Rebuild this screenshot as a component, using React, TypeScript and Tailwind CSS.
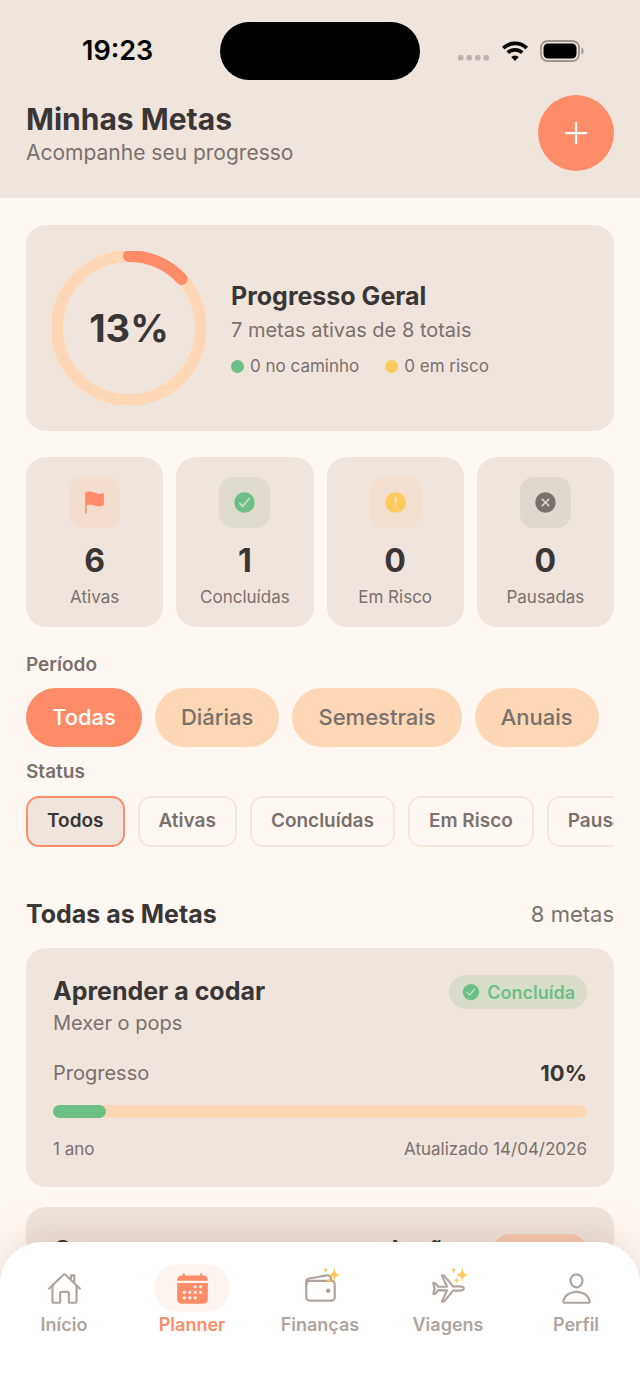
import type { FC, ReactNode } from "react";
import type { IconType } from "react-icons";
import {
  IoAdd,
  IoAirplaneOutline,
  IoAlertCircle,
  IoCalendar,
  IoCheckmarkCircle,
  IoCloseCircle,
  IoFlag,
  IoHomeOutline,
  IoPersonOutline,
  IoWalletOutline,
} from "react-icons/io5";

const stats = [
  { icon: IoFlag, value: 6, label: "Ativas", tile: "bg-[#f3ddce] text-[#ff8c69]" },
  { icon: IoCheckmarkCircle, value: 1, label: "Concluídas", tile: "bg-[#dfdccf] text-[#6bbf87]" },
  { icon: IoAlertCircle, value: 0, label: "Em Risco", tile: "bg-[#f3dfd0] text-[#ffc95c]" },
  { icon: IoCloseCircle, value: 0, label: "Pausadas", tile: "bg-[#e0d7ce] text-[#7a706e]" },
];

const periods = ["Todas", "Diárias", "Semestrais", "Anuais"];
const statuses = ["Todos", "Ativas", "Concluídas", "Em Risco", "Pausadas"];

const tabs: { icon: IconType; label: string; active?: boolean; sparkle?: boolean }[] = [
  { icon: IoHomeOutline, label: "Início" },
  { icon: IoCalendar, label: "Planner", active: true },
  { icon: IoWalletOutline, label: "Finanças", sparkle: true },
  { icon: IoAirplaneOutline, label: "Viagens", sparkle: true },
  { icon: IoPersonOutline, label: "Perfil" },
];

const StatusBar: FC = () => (
  <div className="items-center grid grid-cols-3 pt-[22px]">
    <span className="pl-14 font-semibold text-[27px] text-black">19:23</span>
    <div className="justify-self-center bg-black rounded-full w-50 h-[58px]" />
    <div className="flex justify-end items-center gap-3 pr-[30px]">
      <svg width="32" height="20" viewBox="0 0 32 20" fill="#bdb3ae">
        <rect x="0" y="14" width="5.5" height="5.5" rx="2" />
        <rect x="8.5" y="14" width="5.5" height="5.5" rx="2" />
        <rect x="17" y="14" width="5.5" height="5.5" rx="2" />
        <rect x="25.5" y="14" width="5.5" height="5.5" rx="2" />
      </svg>
      <svg width="26" height="20" viewBox="0 0 26 20" fill="none" stroke="#000" strokeWidth="3.8">
        <path d="M1.3 7.2 A16.8 16.8 0 0 1 24.7 7.2" />
        <path d="M5.8 11.7 A10.4 10.4 0 0 1 20.2 11.7" />
        <path d="M13 20 L9.2 16.1 A5.4 5.4 0 0 1 16.8 16.1 Z" fill="#000" stroke="none" />
      </svg>
      <svg width="44" height="22" viewBox="0 0 44 22">
        <rect x="1" y="1" width="38" height="20" rx="6.5" fill="none" stroke="#9d9390" strokeWidth="1.8" />
        <rect x="3.5" y="3.5" width="33" height="15" rx="4.5" fill="#000" />
        <path d="M41.5 7.5 C44.3 8.8 44.3 13.2 41.5 14.5 Z" fill="#9d9390" />
      </svg>
    </div>
  </div>
);

const Sparkles: FC = () => (
  <svg width="21" height="18" viewBox="0 0 21 18" fill="#ffc95c" className="top-0.5 right-[17px] absolute">
    <path d="M14.3 1 C14.9 6.300 15.700 7.800 20.800 8.800 C15.700 9.800 14.900 11.300 14.300 16.600 C13.700 11.300 12.900 9.800 7.800 8.800 C12.900 7.800 13.700 6.300 14.300 1 Z" />
    <path d="M5.700 0.500 C6 3 6.500 3.500 8.600 4 C6.500 4.500 6 5 5.700 7.500 C5.400 5 4.900 4.500 2.800 4 C4.900 3.500 5.400 3 5.700 0.500 Z" />
    <path d="M8.700 11 C9 13.300 9.500 13.800 11.500 14.300 C9.500 14.800 9 15.300 8.700 17.600 C8.400 15.300 7.900 14.800 5.900 14.300 C7.900 13.800 8.400 13.300 8.700 11 Z" />
  </svg>
);

const ProgressRing: FC<{ percent: number }> = ({ percent }) => {
  const length = 2 * Math.PI * 72;
  return (
    <div className="relative w-[154px] h-[154px] shrink-0">
      <svg viewBox="0 0 154 154" className="w-full h-full -rotate-90" fill="none" strokeWidth="12">
        <circle cx="77" cy="77" r="72" stroke="#ffd7b5" />
        <circle
          cx="77"
          cy="77"
          r="72"
          stroke="#ff8c69"
          strokeLinecap="round"
          strokeDasharray={`${(length * percent) / 100} ${length}`}
        />
      </svg>
      <span className="absolute inset-0 flex justify-center items-center font-bold text-[38px]">{percent}%</span>
    </div>
  );
};

const GoalCard: FC<{ title: string; description: string; percent: number; footer: string; badge: ReactNode }> = ({
  title,
  description,
  percent,
  footer,
  badge,
}) => (
  <article className="bg-[#efe5dc] px-[27px] pt-[27px] pb-6 rounded-[20px]">
    <div className="flex justify-between items-start">
      <div className="min-w-0">
        <h3 className="font-bold text-[25px] truncate leading-8">{title}</h3>
        <p className="text-[#7a706e] text-[20px] leading-8">{description}</p>
      </div>
      {badge}
    </div>
    <div className="flex justify-between items-center mt-[18px]">
      <span className="text-[#7a706e] text-[20px] leading-8">Progresso</span>
      <span className="font-bold text-[22px] leading-8">{percent}%</span>
    </div>
    <div className="bg-[#ffd7b5] mt-4 rounded-full h-[13px]">
      <div className="bg-[#6bbf87] rounded-full h-full" style={{ width: `${percent}%` }} />
    </div>
    <div className="flex justify-between items-center mt-[17px] text-[#7a706e] text-[17px] leading-7">
      <span>{footer}</span>
      <span>Atualizado 14/04/2026</span>
    </div>
  </article>
);

const App: FC = () => {
  return (
    <div className="flex flex-col bg-[#fff8f2] h-screen overflow-hidden font-['Inter',sans-serif] text-[#3a3635]">
      <header className="bg-[#efe5dc] px-[26px] pb-[27px] shrink-0">
        <StatusBar />
        <div className="flex justify-between items-center mt-[15px]">
          <div className="pt-1">
            <h1 className="font-bold text-[30px] leading-9">Minhas Metas</h1>
            <p className="text-[#7a706e] text-[21px] leading-8">Acompanhe seu progresso</p>
          </div>
          <button aria-label="Adicionar meta" className="flex justify-center items-center bg-[#ff8c69] rounded-full w-19 h-19 text-white cursor-pointer">
            <IoAdd size={36} />
          </button>
        </div>
      </header>

      <main className="flex-1 px-[26px] pt-[27px] min-h-0 overflow-y-auto [scrollbar-width:none]">
        <section className="flex items-center gap-[25px] bg-[#efe5dc] p-[26px] rounded-[20px]">
          <ProgressRing percent={13} />
          <div className="pt-1">
            <h2 className="font-bold text-[25px] leading-8">Progresso Geral</h2>
            <p className="mt-0.5 text-[#7a706e] text-[20px] leading-8">7 metas ativas de 8 totais</p>
            <div className="flex gap-[26px] mt-1.5 text-[#7a706e] text-[17px] leading-7">
              <span className="flex items-center gap-1.5">
                <i className="bg-[#6bbf87] rounded-full w-[13px] h-[13px]" />0 no caminho
              </span>
              <span className="flex items-center gap-1.5">
                <i className="bg-[#ffc95c] rounded-full w-[13px] h-[13px]" />0 em risco
              </span>
            </div>
          </div>
        </section>

        <section className="gap-[13px] grid grid-cols-4 mt-[26px]">
          {stats.map(({ icon: Icon, value, label, tile }) => (
            <div key={label} className="flex flex-col items-center bg-[#efe5dc] pt-5 pb-4 rounded-[20px]">
              <div className={`flex justify-center items-center rounded-[14px] w-[51px] h-[51px] ${tile}`}>
                <Icon size={25} />
              </div>
              <span className="mt-[13px] font-bold text-[32px] leading-10">{value}</span>
              <span className="mt-0.5 text-[#7a706e] text-[17px] leading-7">{label}</span>
            </div>
          ))}
        </section>

        <section className="mt-6">
          <h2 className="font-semibold text-[#7a706e] text-[19px] leading-7">Período</h2>
          <div className="flex gap-[13px] mt-[9px] overflow-hidden">
            {periods.map((period, i) => (
              <button
                key={period}
                className={`px-[26px] rounded-full h-[59px] font-medium text-[22px] shrink-0 cursor-pointer ${
                  i === 0 ? "bg-[#ff8c69] text-white" : "bg-[#ffd7b5] text-[#7a706e]"
                }`}
              >
                {period}
              </button>
            ))}
          </div>
          <h2 className="mt-[11px] font-semibold text-[#7a706e] text-[19px] leading-7">Status</h2>
          <div className="flex gap-[13px] mt-[10px] overflow-hidden">
            {statuses.map((status, i) => (
              <button
                key={status}
                className={`px-[19px] border-2 rounded-[13px] h-[51px] font-semibold text-[19px] shrink-0 cursor-pointer ${
                  i === 0 ? "bg-[#efe5dc] border-[#ff8c69] text-[#3a3635]" : "border-[#f1e7df] text-[#7a706e]"
                }`}
              >
                {status}
              </button>
            ))}
          </div>
        </section>

        <section className="mt-[51px]">
          <div className="flex justify-between items-center mb-[18px]">
            <h2 className="font-bold text-[25px] leading-8">Todas as Metas</h2>
            <span className="text-[#7a706e] text-[22px] leading-8">8 metas</span>
          </div>
          <div className="flex flex-col gap-5">
            <GoalCard
              title="Aprender a codar"
              description="Mexer o pops"
              percent={10}
              footer="1 ano"
              badge={
                <span className="flex items-center gap-1.5 bg-[#d7dccb] px-3 rounded-full h-[34px] font-semibold text-[#6bbf87] text-[18px] shrink-0">
                  <IoCheckmarkCircle size={20} />
                  Concluída
                </span>
              }
            />
            <GoalCard
              title="Comprar uma casa com evolução legal"
              description="Economizar"
              percent={10}
              footer="1 ano"
              badge={
                <span className="flex items-center gap-1.5 bg-[#f8c9b1] px-3 rounded-full h-[34px] font-semibold text-[#ff8c69] text-[18px] shrink-0">
                  <IoFlag size={20} />
                  Ativa
                </span>
              }
            />
          </div>
        </section>
      </main>

      {/* rounded corners sit over the end of the list */}
      <nav className="relative flex bg-white shadow-[0_-8px_40px_rgba(120,60,40,0.14)] -mt-[42px] pt-[22px] pb-[53px] rounded-t-[42px] shrink-0">
        {tabs.map(({ icon: Icon, label, active, sparkle }) => (
          <a
            key={label}
            href="#"
            className={`flex flex-col flex-1 items-center font-semibold text-[18px] ${active ? "text-[#ff8c69]" : "text-[#b0a59e]"}`}
          >
            <span className={`relative flex justify-center items-center rounded-full w-19 h-12 ${active ? "bg-[#fff5ef]" : ""}`}>
              <Icon size={35} />
              {sparkle && <Sparkles />}
            </span>
            <span className="leading-[26px]">{label}</span>
          </a>
        ))}
      </nav>
    </div>
  );
};

export default App;
